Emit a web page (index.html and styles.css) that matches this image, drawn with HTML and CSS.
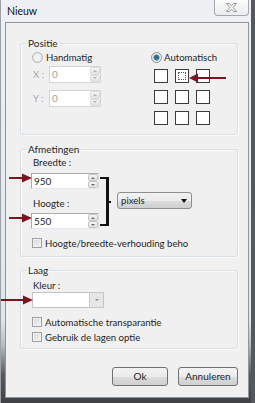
FILE: index.html
```html
<!DOCTYPE html>
<html lang="nl">
    <head>
        <meta charset="UTF-8" />
        <meta name="viewport" content="width=device-width, initial-scale=1.0" />
        <link rel="stylesheet" href="styles.css">
        <title>Nieuw</title>
    </head>
    <body>
        <div class="window">
            <div class="titlebar">
                <span class="titlebar__text">Nieuw</span>
                <div class="titlebar__close">
                    <svg width="11" height="9" viewBox="0 0 11 9">
                        <polygon points="0.5,0.5 3.5,0.5 5.5,2.8 7.5,0.5 10.5,0.5 7.1,4.5 10.5,8.5 7.5,8.5 5.5,6.2 3.5,8.5 0.5,8.5 3.9,4.5" fill="#f7f7f7" stroke="#8c8c8c" stroke-width="0.9" />
                    </svg>
                </div>
            </div>

            <div class="client">
                <fieldset class="group group--positie">
                    <legend class="group__title">Positie</legend>
                    <div class="positie">
                        <div class="positie__manual">
                            <div class="option option--disabled">
                                <span class="radio"></span>Handmatig
                            </div>
                            <div class="coord">
                                <span class="coord__label">X :</span>
                                <div class="spin spin--disabled spin--small">
                                    <span class="spin__value">0</span>
                                    <span class="spin__buttons">
                                        <span class="spin__btn spin__btn--up"></span>
                                        <span class="spin__btn spin__btn--down"></span>
                                    </span>
                                </div>
                            </div>
                            <div class="coord coord--y">
                                <span class="coord__label">Y :</span>
                                <div class="spin spin--disabled spin--small">
                                    <span class="spin__value">0</span>
                                    <span class="spin__buttons">
                                        <span class="spin__btn spin__btn--up"></span>
                                        <span class="spin__btn spin__btn--down"></span>
                                    </span>
                                </div>
                            </div>
                        </div>
                        <div class="positie__auto">
                            <div class="option">
                                <span class="radio radio--checked"></span>Automatisch
                            </div>
                            <div class="anchors">
                                <span class="anchors__cell"></span>
                                <span class="anchors__cell anchors__cell--active"></span>
                                <span class="anchors__cell"></span>
                                <span class="anchors__cell"></span>
                                <span class="anchors__cell"></span>
                                <span class="anchors__cell"></span>
                                <span class="anchors__cell"></span>
                                <span class="anchors__cell"></span>
                                <span class="anchors__cell"></span>
                            </div>
                        </div>
                    </div>
                </fieldset>

                <fieldset class="group group--size">
                    <legend class="group__title">Afmetingen</legend>
                    <div class="size">
                        <div class="size__fields">
                            <div class="field-label">Breedte :</div>
                            <div class="spin spin--wide">
                                <span class="spin__value">950</span>
                                <span class="spin__buttons">
                                    <span class="spin__btn spin__btn--up"></span>
                                    <span class="spin__btn spin__btn--down"></span>
                                </span>
                            </div>
                            <div class="field-label field-label--second">Hoogte :</div>
                            <div class="spin spin--wide spin--tight">
                                <span class="spin__value">550</span>
                                <span class="spin__buttons">
                                    <span class="spin__btn spin__btn--up"></span>
                                    <span class="spin__btn spin__btn--down"></span>
                                </span>
                            </div>
                        </div>
                        <div class="bracket"></div>
                        <div class="select">
                            <span class="select__text">pixels</span>
                            <span class="select__arrow"></span>
                        </div>
                    </div>
                    <div class="check check--ratio">
                        <span class="check__box"></span>
                        <span class="check__text">Hoogte/breedte-verhouding behouden</span>
                    </div>
                </fieldset>

                <fieldset class="group group--laag">
                    <legend class="group__title">Laag</legend>
                    <div class="field-label field-label--kleur">Kleur :</div>
                    <div class="colour">
                        <span class="colour__swatch"></span>
                        <span class="colour__btn"></span>
                    </div>
                    <div class="check check--first">
                        <span class="check__box"></span>
                        <span class="check__text">Automatische transparantie</span>
                    </div>
                    <div class="check">
                        <span class="check__box"></span>
                        <span class="check__text">Gebruik de lagen optie</span>
                    </div>
                </fieldset>

                <div class="actions">
                    <button class="button button--ok">Ok</button>
                    <button class="button button--cancel">Annuleren</button>
                </div>
            </div>

            <!-- annotation arrows drawn over the dialog -->
            <svg class="arrows" width="251" height="403" viewBox="0 0 251 403">
                <g fill="#7b1420" stroke="#7b1420">
                    <line x1="226" y1="78" x2="196" y2="78" stroke-width="2" />
                    <polygon points="189,78 198,73.5 198,82.5" stroke="none" />

                    <line x1="9" y1="178" x2="24" y2="178" stroke-width="2" />
                    <polygon points="32,178 22,173.5 22,182.5" stroke="none" />

                    <line x1="9" y1="218" x2="24" y2="218" stroke-width="2" />
                    <polygon points="32,218 22,213.5 22,222.5" stroke="none" />

                    <line x1="1" y1="300" x2="25" y2="300" stroke-width="2" />
                    <polygon points="33,300 23,295.5 23,304.5" stroke="none" />
                </g>
            </svg>
        </div>
    </body>
</html>
```

FILE: styles.css
```css
*,
*::before,
*::after {
    box-sizing: border-box;
}

body {
    margin: 0;
    min-height: 100vh;
    background: #55585c;
    font-family: Lato, 'Open Sans', 'Liberation Sans', sans-serif;
    font-size: 9.6px;
    color: #1e1e1e;
}

.window {
    position: relative;
    width: 251px;
    height: 403px;
    border-left: 1px solid #9aa0a6;
    background: linear-gradient(
        to bottom,
        #eef1f4 0,
        #e2e6ea 320px,
        #b9bcbf 345px,
        #57595c 375px,
        #3f4144 403px
    );
}

/* title bar */

.titlebar {
    display: flex;
    height: 22px;
    padding-left: 6px;
}

.titlebar__text {
    padding-top: 4px;
    font-size: 10.5px;
    line-height: 15px;
    color: #111;
}

.titlebar__close {
    display: flex;
    justify-content: center;
    align-items: center;
    width: 35px;
    height: 16px;
    margin-left: auto;
    margin-right: 2px;
    border: 1px solid #a3a8ae;
    border-top: none;
    border-radius: 0 0 4px 4px;
    background: linear-gradient(to bottom, #fdfdfd, #e9ebee);
}

/* client area */

.client {
    width: 244px;
    height: 376px;
    margin-left: 4px;
    border: 1px solid #8d96a0;
    background: #f0f0f0;
    overflow: hidden;
}

.group {
    min-width: 0;
    margin: 0 10px 0 14px;
    padding: 0 0 0 5px;
    border: 1px solid #d5dfe5;
    border-radius: 3px;
    box-shadow: inset 1px 1px 0 #fafafa, 1px 1px 0 #fafafa;
}

.group__title {
    padding: 0 2px;
    font-size: 10px;
    line-height: 14px;
}

.group--positie {
    margin-top: 13px;
    padding-bottom: 9px;
}

.group--size {
    margin-top: 7px;
    padding-bottom: 6px;
}

.group--laag {
    margin-top: 6px;
    padding-bottom: 4px;
}

/* positie */

.positie {
    display: flex;
    padding-left: 6px;
}

.positie__manual {
    width: 119px;
}

.option {
    display: flex;
    align-items: center;
    height: 14px;
    white-space: nowrap;
}

.radio {
    width: 11px;
    height: 11px;
    margin-right: 2px;
    border: 1px solid #b4b4b4;
    border-radius: 50%;
    background: radial-gradient(circle, #f4f4f4 30%, #dcdcdc 100%);
}

.option--disabled .radio {
    margin-right: 3px;
}

.radio--checked {
    border-color: #8e8f8f;
    background: radial-gradient(
        circle,
        #2a5f7c 0,
        #3d7f9c 2.5px,
        #eaeaea 3.5px,
        #f6f6f6 100%
    );
}

.coord {
    display: flex;
    align-items: center;
    margin-top: 2px;
    padding-left: 1px;
}

.coord--y {
    margin-top: 7px;
}

.coord__label {
    width: 16px;
    color: #a6a6a6;
}

.anchors {
    display: grid;
    grid-template-columns: repeat(3, 14px);
    grid-auto-rows: 14px;
    column-gap: 7px;
    row-gap: 7px;
    margin-top: 5px;
    margin-left: 3px;
}

.anchors__cell {
    position: relative;
    border: 1px solid #3b3b3b;
    background: #fff;
}

.anchors__cell--active::after {
    content: '';
    position: absolute;
    inset: 2px;
    border: 1px dotted #555;
}

/* spin boxes */

.spin {
    display: flex;
    height: 16px;
    border: 1px solid #abadb3;
    border-right-color: #dbdfe6;
    border-bottom-color: #e3e9ef;
    background: #fff;
}

.spin--small {
    width: 52px;
    height: 17px;
}

.spin--wide {
    width: 68px;
    margin-top: 3px;
}

.spin--tight {
    margin-top: 2px;
}

.spin__value {
    flex: 1;
    padding-left: 2px;
    font-size: 10px;
    line-height: 14px;
}

.spin--disabled {
    border-color: #d2d4d8;
}

.spin--disabled .spin__value {
    color: #a0a0a0;
}

.spin__buttons {
    display: flex;
    flex-direction: column;
    width: 10px;
}

.spin__btn {
    position: relative;
    flex: 1;
    border: 1px solid #c3c5c9;
    border-radius: 2px;
    background: linear-gradient(to bottom, #f6f6f6, #e2e2e2);
}

.spin__btn::before {
    content: '';
    position: absolute;
    left: 50%;
    top: 50%;
    margin-left: -2px;
    border-left: 2px solid transparent;
    border-right: 2px solid transparent;
}

.spin__btn--up::before {
    margin-top: -1px;
    border-bottom: 2px solid #6b6b6b;
}

.spin__btn--down::before {
    margin-top: -1px;
    border-top: 2px solid #6b6b6b;
}

.spin--disabled .spin__btn {
    border-color: #dadada;
}

.spin--disabled .spin__btn--up::before {
    border-bottom-color: #b0b0b0;
}

.spin--disabled .spin__btn--down::before {
    border-top-color: #b0b0b0;
}

/* afmetingen */

.size {
    display: flex;
    align-items: flex-start;
}

.size__fields {
    margin-left: 5px;
}

.field-label {
    padding-left: 2px;
    line-height: 14px;
}

.field-label--second {
    margin-top: 8px;
}

.bracket {
    position: relative;
    width: 9px;
    height: 49px;
    margin-top: 21px;
    margin-left: 1px;
    border: 2px solid #111;
    border-left: none;
    border-right-width: 3px;
}

.bracket::after {
    content: '';
    position: absolute;
    left: 100%;
    top: 50%;
    width: 5px;
    height: 2px;
    margin-top: -1px;
    background: #111;
}

.select {
    display: flex;
    align-items: center;
    width: 75px;
    height: 17px;
    margin-top: 36px;
    margin-left: 8px;
    padding: 0 4px 0 3px;
    border: 1px solid #8e8f8f;
    border-radius: 3px;
    background: linear-gradient(to bottom, #f2f2f2 0, #ebebeb 50%, #dddddd 51%, #cfcfcf 100%);
}

.select__text {
    flex: 1;
    line-height: 14px;
}

.select__arrow {
    border-left: 3px solid transparent;
    border-right: 3px solid transparent;
    border-top: 4px solid #111;
}

/* checkboxes */

.check {
    display: flex;
    align-items: center;
    height: 14px;
    margin-top: 1px;
    padding-left: 6px;
    white-space: nowrap;
    overflow: hidden;
}

.check--ratio {
    width: 162px;
    margin-top: 7px;
}

.check--first {
    margin-top: 7px;
}

.check__box {
    flex: none;
    width: 10px;
    height: 10px;
    margin-right: 3px;
    border: 1px solid #a0a0a0;
    background: linear-gradient(135deg, #d8d8d8, #f4f4f4);
    box-shadow: inset 0 0 0 1px #f2f2f2;
}

/* laag */

.field-label--kleur {
    padding-top: 3px;
    padding-left: 7px;
    line-height: 12px;
    box-sizing: content-box;
}

.colour {
    display: flex;
    width: 72px;
    height: 16px;
    margin-left: 6px;
    border: 1px solid #c4c4c4;
    background: #e6e6e6;
}

.colour__swatch {
    width: 57px;
    background: #fff;
    border-right: 1px solid #c9c9c9;
}

.colour__btn {
    position: relative;
    flex: 1;
}

.colour__btn::before {
    content: '';
    position: absolute;
    left: 50%;
    top: 50%;
    margin-left: -2px;
    margin-top: -1px;
    border-left: 2px solid transparent;
    border-right: 2px solid transparent;
    border-top: 2px solid #888;
}

/* buttons */

.actions {
    display: flex;
    justify-content: flex-end;
    gap: 10px;
    margin-top: 18px;
    margin-right: 10px;
}

.button {
    height: 19px;
    padding: 0;
    border: 1px solid #707070;
    border-radius: 3px;
    background: linear-gradient(to bottom, #f2f2f2 0, #ebebeb 50%, #dddddd 51%, #cfcfcf 100%);
    font-family: inherit;
    font-size: 10px;
    color: #1e1e1e;
    line-height: 15px;
}

.button--ok {
    width: 56px;
}

.button--cancel {
    width: 60px;
}

.arrows {
    position: absolute;
    top: 0;
    left: -1px;
    pointer-events: none;
}
```
